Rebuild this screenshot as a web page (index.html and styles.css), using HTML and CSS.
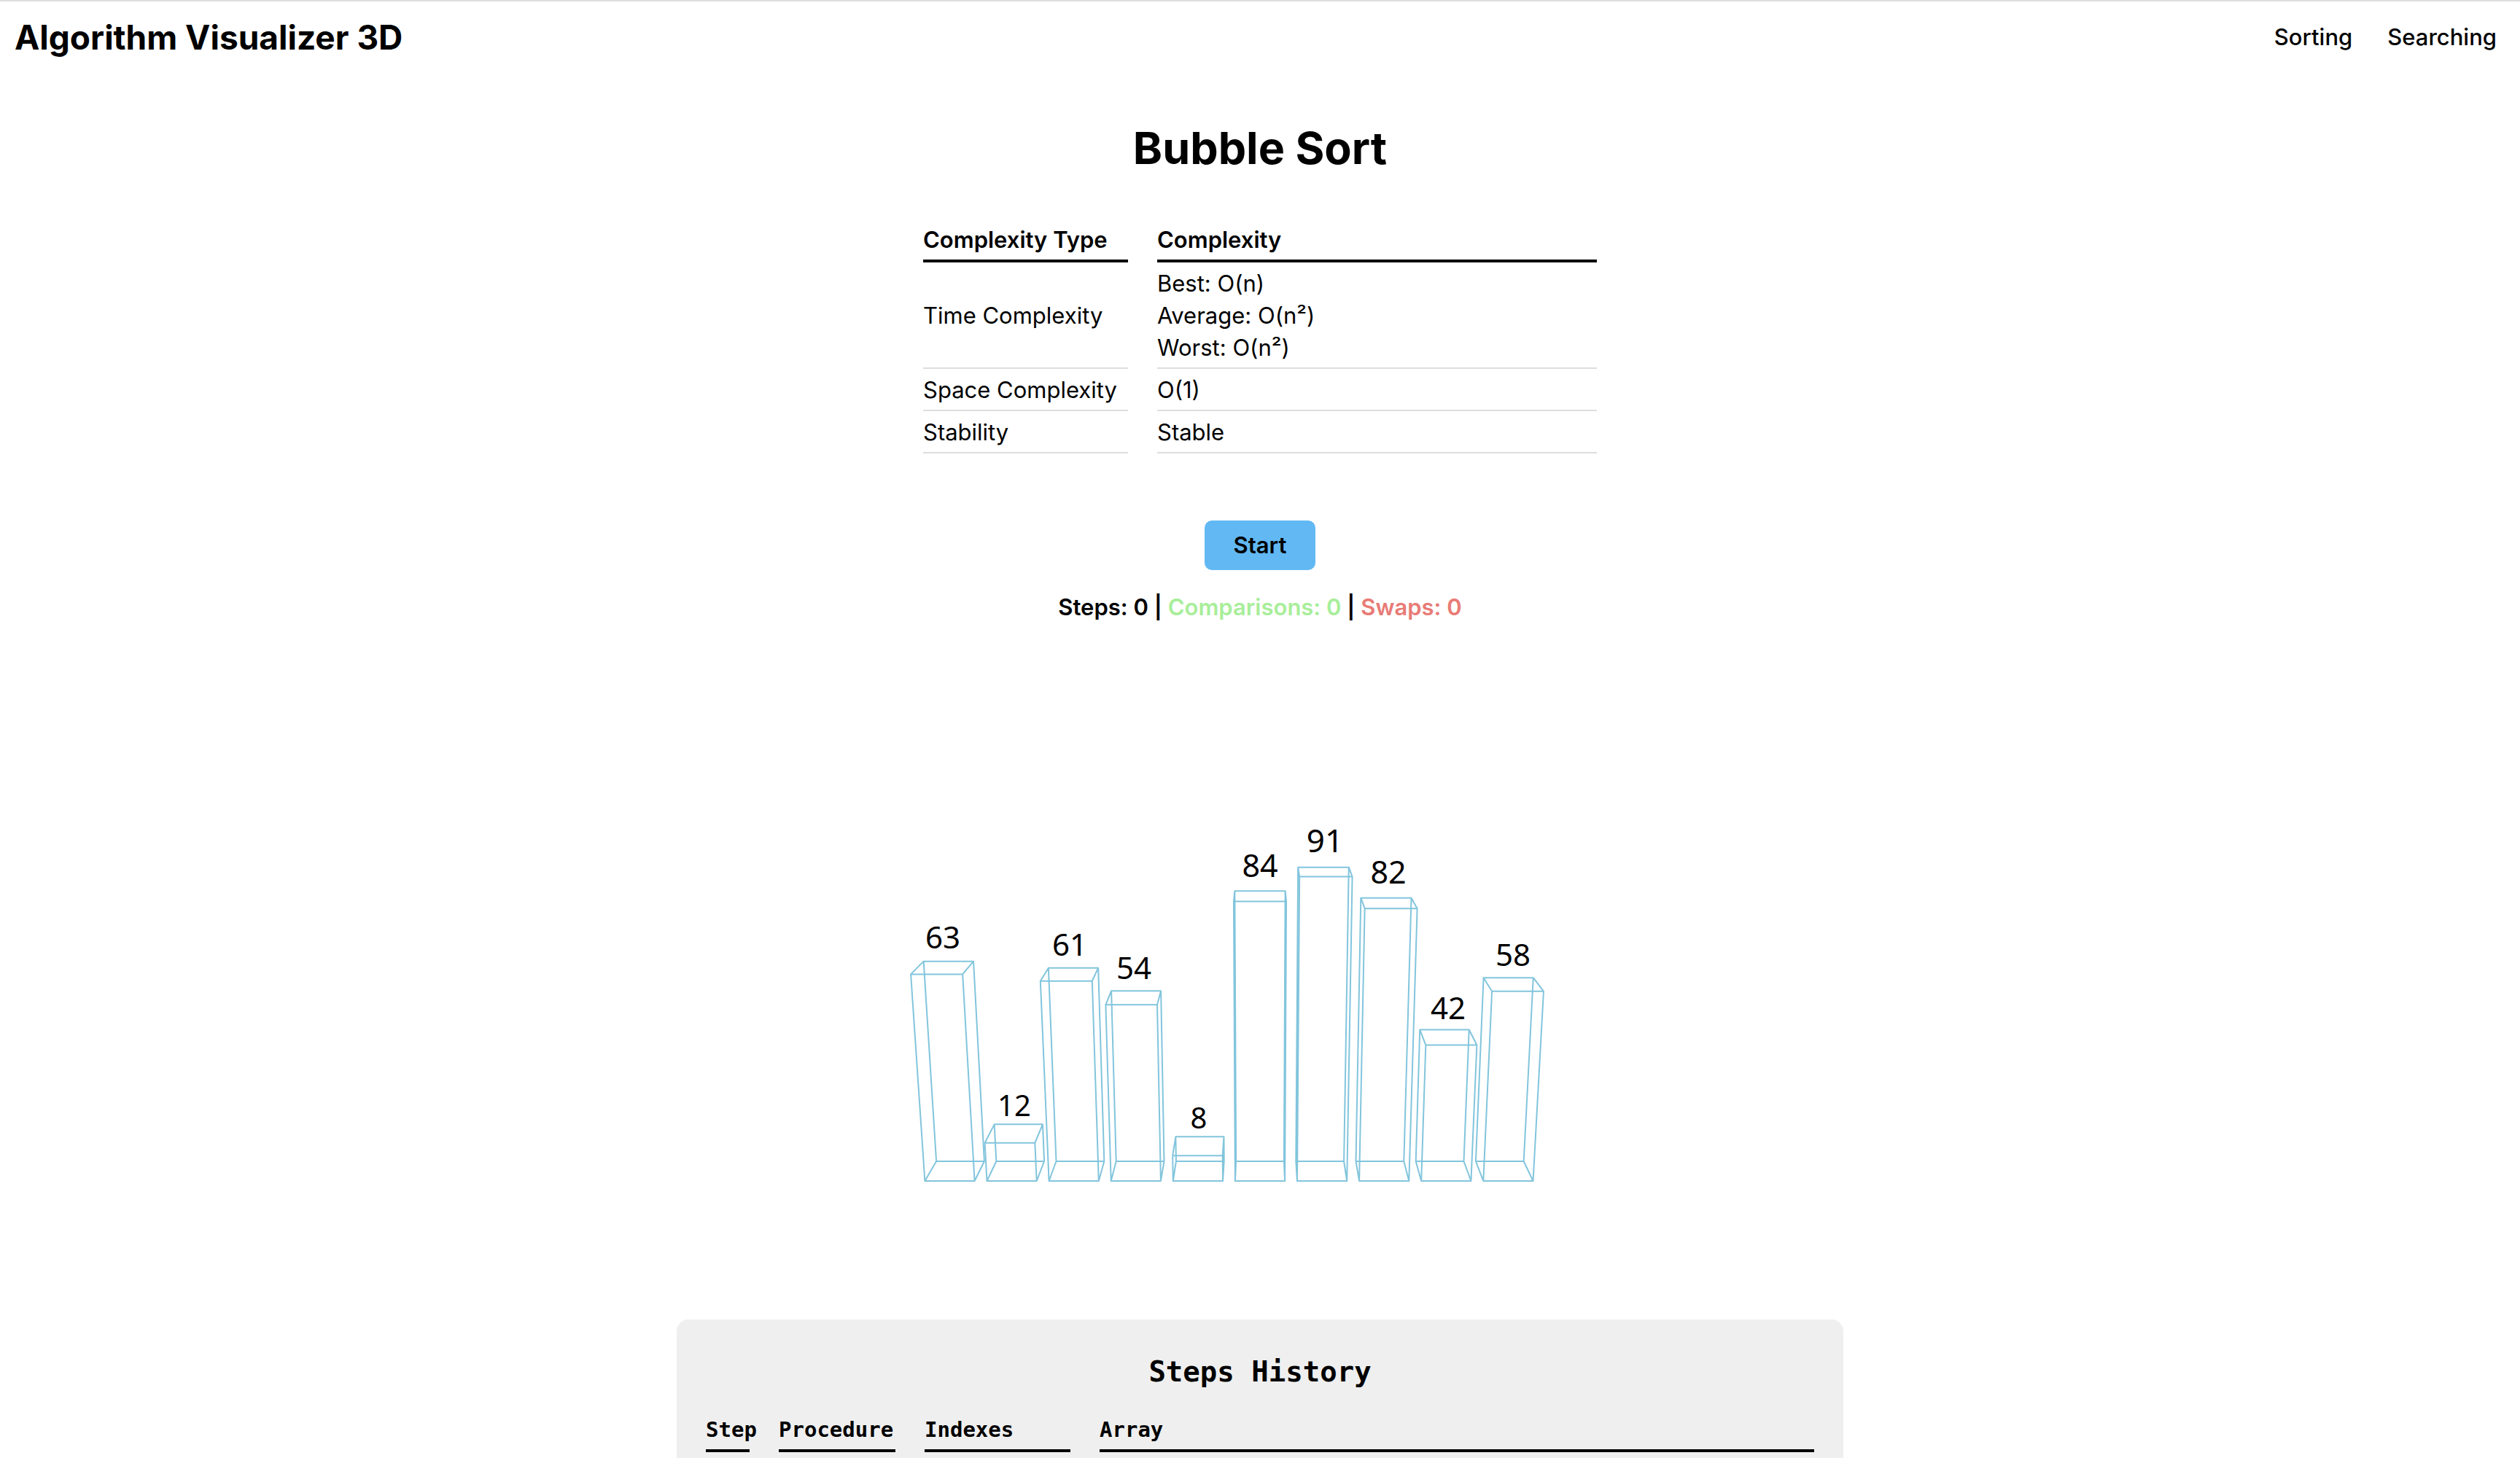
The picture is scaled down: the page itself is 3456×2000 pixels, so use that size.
FILE: index.html
```html
<!DOCTYPE html>
<html lang="en">
<head>
<meta charset="utf-8">
<meta name="viewport" content="width=device-width, initial-scale=1">
<title>Algorithm Visualizer 3D</title>
<link rel="stylesheet" href="styles.css">
</head>
<body>
<header class="topbar">
  <a class="brand" href="#">Algorithm Visualizer 3D</a>
  <nav class="nav">
    <a class="nav-link" href="#sorting">Sorting</a>
    <a class="nav-link" href="#searching">Searching</a>
  </nav>
</header>
<main class="page">
  <h1 class="title">Bubble Sort</h1>
  <table class="table complexity">
    <colgroup><col class="col-type"><col></colgroup>
    <thead>
      <tr><th scope="col">Complexity Type</th><th scope="col">Complexity</th></tr>
    </thead>
    <tbody>
      <tr><td>Time Complexity</td><td>Best: O(n)<br>Average: O(n²)<br>Worst: O(n²)</td></tr>
      <tr><td>Space Complexity</td><td>O(1)</td></tr>
      <tr><td>Stability</td><td>Stable</td></tr>
    </tbody>
  </table>
  <button class="start" type="button">Start</button>
  <p class="stats">Steps: 0 | <span class="comparisons">Comparisons: 0</span> | <span class="swaps">Swaps: 0</span></p>
  <svg class="scene" id="scene" viewBox="0 0 1056 955" role="img" aria-label="Array values as bars"></svg>
  <section class="history">
    <h2 class="history-title">Steps History</h2>
    <table class="table steps">
      <colgroup><col class="col-step"><col class="col-procedure"><col class="col-indexes"><col></colgroup>
      <thead>
        <tr><th scope="col">Step</th><th scope="col">Procedure</th><th scope="col">Indexes</th><th scope="col">Array</th></tr>
      </thead>
    </table>
  </section>
</main>
<script src="scene.js"></script>
</body>
</html>
```
FILE: styles.css
```css
* { box-sizing: border-box; }

body {
  margin: 0;
  min-height: 100vh;
  display: flex;
  flex-direction: column;
  background: #fff;
  color: #000;
  font: 400 31px/44px Inter, "Liberation Sans", sans-serif;
}

.topbar {
  display: flex;
  align-items: center;
  justify-content: space-between;
  padding: 20px 32px 20px 20px;
  border-top: 2px solid #dedede;
}
.brand {
  font-size: 46px;
  line-height: 58px;
  font-weight: 700;
  color: inherit;
  text-decoration: none;
}
.nav { display: flex; gap: 48px; }
.nav-link { color: inherit; font-weight: 500; text-decoration: none; }

.page {
  flex: 1;
  display: flex;
  flex-direction: column;
  align-items: center;
  padding-top: 64px;
}
.title { margin: 0 0 58px; font-size: 61px; line-height: 78px; font-weight: 700; }

.table { table-layout: fixed; border-collapse: separate; border-spacing: 40px 0; }
.table th, .table td { padding: 7px 0 5px; text-align: left; vertical-align: middle; }
.table th { border-bottom: 4px solid #000; white-space: nowrap; }
.table td { border-bottom: 2px solid #ddd; }

.complexity { width: 1004px; max-width: 100%; }
.complexity th { font-weight: 600; }
.col-type { width: 281px; }

.start {
  margin: 92px 0 29px;
  padding: 12px 40px;
  border: 0;
  border-radius: 10px;
  background: #61b8f3;
  color: #000;
  font: inherit;
  font-weight: 600;
  cursor: pointer;
}
.stats { margin: 0; font-weight: 600; }
.comparisons { color: #a8ee9a; }
.swaps { color: #e87b76; }

.scene { display: block; width: 1056px; max-width: 100%; height: auto; }
.scene path { fill: none; stroke: #82c5dd; stroke-width: 2; stroke-linejoin: round; }
.scene text { font-family: "Noto Sans", "Open Sans", sans-serif; text-anchor: middle; fill: #000; }

.history {
  flex: 1;
  width: 1600px;
  max-width: 100%;
  padding: 48px 0 8px;
  border-radius: 16px 16px 0 0;
  background: #efefef;
  font-family: "DejaVu Sans Mono", monospace;
}
.history-title { margin: 0 0 26px; font-size: 39px; line-height: 48px; font-weight: 700; text-align: center; }
.steps { width: 100%; font-size: 29px; }
.steps th { font-weight: 700; }
.col-step { width: 60px; }
.col-procedure { width: 160px; }
.col-indexes { width: 200px; }
```
FILE: scene.js
```js
const values = [63, 12, 61, 54, 8, 84, 91, 82, 42, 58];
const scene = document.getElementById("scene");
const NS = "http://www.w3.org/2000/svg";
const CENTER = 528;

// Each depth plane: floor line, bar spacing, half bar width, height unit, perspective factor.
const front = { floor: 765, gap: 85.1, half: 34.1, unit: 4.32, depth: 0.00064 };
const back = { floor: 738, gap: 82.2, half: 32.9, unit: 4.19, depth: 0.0006 };

function project(plane, slot, value) {
  const scale = 1 / (1 - plane.depth * value);
  const mid = CENTER + plane.gap * slot * scale;
  const half = plane.half * scale;
  return { mid, left: mid - half, right: mid + half, y: plane.floor - plane.unit * value * scale };
}

function add(name, attrs) {
  const el = document.createElementNS(NS, name);
  for (const key in attrs) el.setAttribute(key, attrs[key]);
  return scene.appendChild(el);
}

values.forEach((value, i) => {
  const slot = i - 5;
  const fb = project(front, slot, 0);
  const ft = project(front, slot, value);
  const bb = project(back, slot, 0);
  const bt = project(back, slot, value);
  const face = (t, b) => `M${t.left} ${t.y}H${t.right}L${b.right} ${b.y}H${b.left}Z`;
  const edge = (a, b) => `M${a.left} ${a.y}L${b.left} ${b.y}M${a.right} ${a.y}L${b.right} ${b.y}`;
  add("path", { d: face(ft, fb) + face(bt, bb) + edge(ft, bt) + edge(fb, bb) });

  const label = add("text", {
    x: Math.round((ft.mid + bt.mid) / 2),
    y: Math.round((ft.y + bt.y) / 2 - 24 - value / 30),
    "font-size": Math.round(40 / (1 - 0.0009 * value)),
  });
  label.textContent = value;
});
```
